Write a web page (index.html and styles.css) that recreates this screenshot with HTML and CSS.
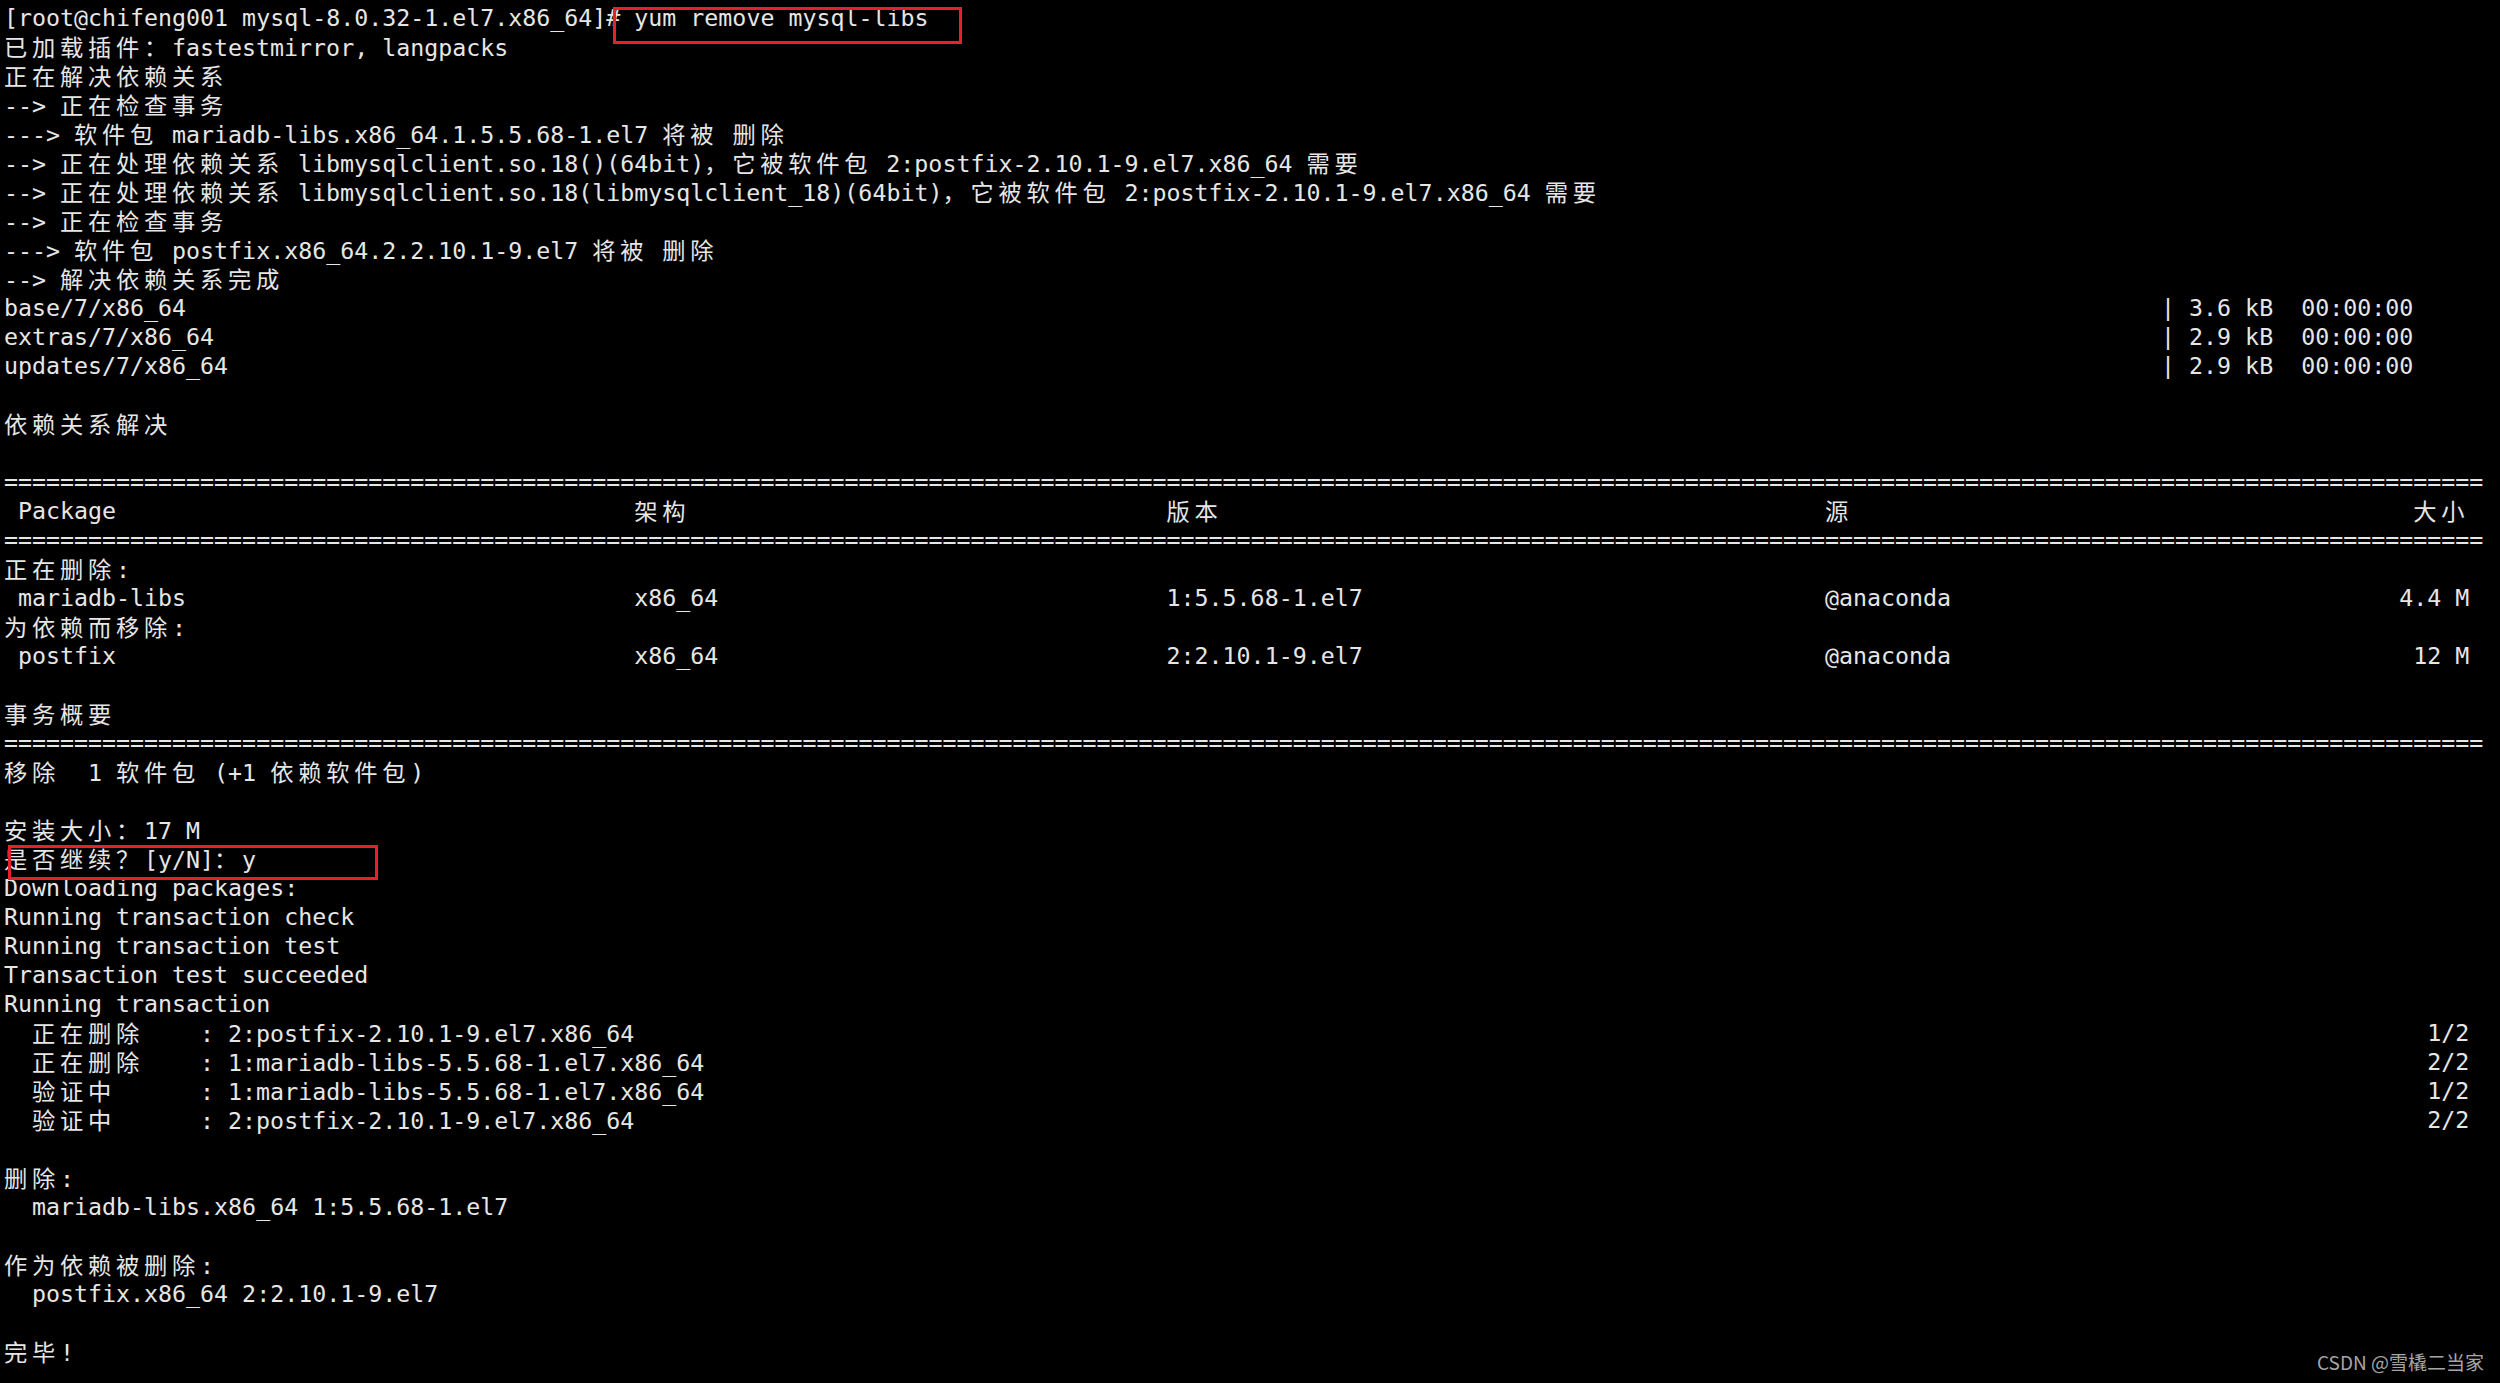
FILE: index.html
```html
<!DOCTYPE html>
<html lang="zh-CN">
<head>
    <meta charset="UTF-8">
    <meta name="viewport" content="width=device-width, initial-scale=1.0">
    <title>yum remove mysql-libs</title>
    <link rel="stylesheet" href="styles.css">
</head>
<body>
    <div class="term">
        <div class="ln">[root@chifeng001 mysql-8.0.32-1.el7.x86_64]# yum remove mysql-libs</div>
        <div class="ln"><span class="z">已加载插件：</span>fastestmirror, langpacks</div>
        <div class="ln"><span class="z">正在解决依赖关系</span></div>
        <div class="ln">--&gt; <span class="z">正在检查事务</span></div>
        <div class="ln">---&gt; <span class="z">软件包</span> mariadb-libs.x86_64.1.5.5.68-1.el7 <span class="z">将被</span> <span class="z">删除</span></div>
        <div class="ln">--&gt; <span class="z">正在处理依赖关系</span> libmysqlclient.so.18()(64bit)<span class="z">，它被软件包</span> 2:postfix-2.10.1-9.el7.x86_64 <span class="z">需要</span></div>
        <div class="ln">--&gt; <span class="z">正在处理依赖关系</span> libmysqlclient.so.18(libmysqlclient_18)(64bit)<span class="z">，它被软件包</span> 2:postfix-2.10.1-9.el7.x86_64 <span class="z">需要</span></div>
        <div class="ln">--&gt; <span class="z">正在检查事务</span></div>
        <div class="ln">---&gt; <span class="z">软件包</span> postfix.x86_64.2.2.10.1-9.el7 <span class="z">将被</span> <span class="z">删除</span></div>
        <div class="ln">--&gt; <span class="z">解决依赖关系完成</span></div>

        <div class="dl"><span class="c">base/7/x86_64</span><span class="c">| 3.6 kB  00:00:00</span></div>
        <div class="dl"><span class="c">extras/7/x86_64</span><span class="c">| 2.9 kB  00:00:00</span></div>
        <div class="dl"><span class="c">updates/7/x86_64</span><span class="c">| 2.9 kB  00:00:00</span></div>
        <div class="ln"></div>
        <div class="ln"><span class="z">依赖关系解决</span></div>
        <div class="ln"></div>

        <div class="ln">=================================================================================================================================================================================</div>
        <div class="pkg">
            <span class="c"> Package</span>
            <span class="c"><span class="z">架构</span></span>
            <span class="c"><span class="z">版本</span></span>
            <span class="c"><span class="z">源</span></span>
            <span class="c"><span class="z">大小</span></span>
        </div>
        <div class="ln">=================================================================================================================================================================================</div>
        <div class="ln"><span class="z">正在删除</span>:</div>
        <div class="pkg">
            <span class="c"> mariadb-libs</span>
            <span class="c">x86_64</span>
            <span class="c">1:5.5.68-1.el7</span>
            <span class="c">@anaconda</span>
            <span class="c">4.4 M</span>
        </div>
        <div class="ln"><span class="z">为依赖而移除</span>:</div>
        <div class="pkg">
            <span class="c"> postfix</span>
            <span class="c">x86_64</span>
            <span class="c">2:2.10.1-9.el7</span>
            <span class="c">@anaconda</span>
            <span class="c">12 M</span>
        </div>
        <div class="ln"></div>
        <div class="ln"><span class="z">事务概要</span></div>
        <div class="ln">=================================================================================================================================================================================</div>
        <div class="ln"><span class="z">移除</span>  1 <span class="z">软件包</span> (+1 <span class="z">依赖软件包</span>)</div>
        <div class="ln"></div>
        <div class="ln"><span class="z">安装大小：</span>17 M</div>
        <div class="ln"><span class="z">是否继续？</span>[y/N]<span class="z">：</span>y</div>
        <div class="ln">Downloading packages:</div>
        <div class="ln">Running transaction check</div>
        <div class="ln">Running transaction test</div>
        <div class="ln">Transaction test succeeded</div>
        <div class="ln">Running transaction</div>
        <div class="step"><span class="c">  <span class="z">正在删除</span>    : 2:postfix-2.10.1-9.el7.x86_64</span><span class="c">1/2</span></div>
        <div class="step"><span class="c">  <span class="z">正在删除</span>    : 1:mariadb-libs-5.5.68-1.el7.x86_64</span><span class="c">2/2</span></div>
        <div class="step"><span class="c">  <span class="z">验证中</span>      : 1:mariadb-libs-5.5.68-1.el7.x86_64</span><span class="c">1/2</span></div>
        <div class="step"><span class="c">  <span class="z">验证中</span>      : 2:postfix-2.10.1-9.el7.x86_64</span><span class="c">2/2</span></div>
        <div class="ln"></div>
        <div class="ln"><span class="z">删除</span>:</div>
        <div class="ln">  mariadb-libs.x86_64 1:5.5.68-1.el7</div>
        <div class="ln"></div>
        <div class="ln"><span class="z">作为依赖被删除</span>:</div>
        <div class="ln">  postfix.x86_64 2:2.10.1-9.el7</div>
        <div class="ln"></div>
        <div class="ln"><span class="z">完毕</span>!</div>

        <div class="mark mark-cmd"></div>
        <div class="mark mark-confirm"></div>
    </div>
    <div class="watermark">CSDN @雪橇二当家</div>
</body>
</html>
```
FILE: styles.css
```css
html, body {
    margin: 0;
    padding: 0;
    background-color: #000;
}
body {
    width: 2500px;
    height: 1383px;
    overflow: hidden;
    position: relative;
}
.term {
    position: relative;
    font-family: "DejaVu Sans Mono", "Liberation Mono", monospace;
    font-size: 23.28px;
    line-height: 29px;
    color: #e6e6e6;
    padding: 3px 0 0 4px;
    width: 177ch;
}
.ln {
    height: 29px;
    white-space: pre;
}
.z {
    font-family: "Noto Sans CJK SC", "Noto Sans CJK TC", sans-serif;
    letter-spacing: 4.74px;
}
.c {
    white-space: pre;
}
.dl {
    display: grid;
    grid-template-columns: 154ch auto;
    height: 29px;
}
.pkg {
    display: grid;
    grid-template-columns: 45ch 38ch 47ch 1fr auto;
    height: 29px;
    padding-right: 1ch;
}
.step {
    display: flex;
    justify-content: space-between;
    height: 29px;
    padding-right: 1ch;
}
.mark {
    position: absolute;
    border: 3px solid #e5212b;
    box-sizing: border-box;
}
.mark-cmd {
    left: 613px;
    top: 7px;
    width: 349px;
    height: 37px;
}
.mark-confirm {
    left: 8px;
    top: 845px;
    width: 370px;
    height: 35px;
}
.watermark {
    position: absolute;
    right: 16px;
    top: 1348px;
    font-family: "Noto Sans CJK SC", "Noto Sans", sans-serif;
    font-size: 19px;
    line-height: 28px;
    color: #a6a6a6;
}
```
